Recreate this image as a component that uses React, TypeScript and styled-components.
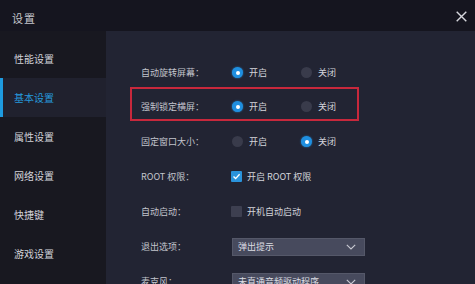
import React from "react";
import styled, { createGlobalStyle } from "styled-components";

const Global = createGlobalStyle`
  html, body { margin: 0; padding: 0; background: #222433; }
  body { font-family: "Noto Sans CJK SC", "Noto Sans", sans-serif; }
  * { box-sizing: border-box; }
`;

const Window = styled.div`
  width: 475px;
  height: 284px;
  overflow: hidden;
  display: flex;
  flex-direction: column;
  background: #222433;
  color: #c9cad3;
`;

const Header = styled.div`
  height: 31px;
  flex: none;
  display: flex;
  align-items: center;
  justify-content: space-between;
  padding: 4px 8px 0 12px;
  background: #15151f;
`;

const Title = styled.div`
  font-size: 11px;
  color: #c4c5cc;
  letter-spacing: 1px;
`;

const Close = styled.svg`
  width: 11px;
  height: 11px;
  margin-bottom: 3px;
`;

const Body = styled.div`
  flex: 1;
  display: flex;
  min-height: 0;
`;

const Sidebar = styled.div`
  width: 106px;
  flex: none;
  background: #181820;
  padding-top: 8px;
  display: flex;
  flex-direction: column;
`;

const NavItem = styled.div<{ $active?: boolean }>`
  height: 39px;
  display: flex;
  align-items: center;
  padding-left: 14px;
  font-size: 10px;
  color: ${(p) => (p.$active ? "#2699dc" : "#d2d3da")};
  background: ${(p) => (p.$active ? "#20212e" : "transparent")};
  border-left: 3px solid ${(p) => (p.$active ? "#1e9be0" : "transparent")};
  padding-left: 11px;
`;

const Content = styled.div`
  flex: 1;
  padding: 24px 0 0 24px;
  display: flex;
  flex-direction: column;
`;

const Row = styled.div<{ $highlight?: boolean }>`
  width: 229px;
  flex: none;
  display: flex;
  align-items: center;
  height: ${(p) => (p.$highlight ? "34px" : "35px")};
  padding-left: ${(p) => (p.$highlight ? "9px" : "11px")};
  padding-top: ${(p) => (p.$highlight ? "5px" : "0")};
  margin: ${(p) => (p.$highlight ? "-3px 0 3px" : "0")};
  border: ${(p) => (p.$highlight ? "2px solid #c8283c" : "none")};
`;

const Label = styled.div`
  width: 91px;
  flex: none;
  font-size: 9px;
  color: #c3c4cd;
  white-space: nowrap;
`;

const Option = styled.div`
  width: 69px;
  flex: none;
  display: flex;
  align-items: center;
  gap: 6px;
  font-size: 9px;
  color: #d3d4db;
  white-space: nowrap;
`;

const Radio = styled.span<{ $on?: boolean }>`
  width: 11px;
  height: 11px;
  border-radius: 50%;
  flex: none;
  background: ${(p) => (p.$on ? "#1f8fe0" : "#393b4b")};
  display: flex;
  align-items: center;
  justify-content: center;
  box-shadow: ${(p) => (p.$on ? "0 0 2px rgba(40,150,230,0.8)" : "none")};
  &::after {
    content: "";
    width: 4px;
    height: 4px;
    border-radius: 50%;
    background: #fff;
    display: ${(p) => (p.$on ? "block" : "none")};
  }
`;

const Check = styled.span<{ $on?: boolean }>`
  width: 11px;
  height: 11px;
  flex: none;
  border-radius: 1px;
  background: ${(p) => (p.$on ? "#2a93dc" : "#3d3f50")};
  display: flex;
  align-items: center;
  justify-content: center;
  margin-left: -1px;
`;

const CheckOption = styled(Option)`
  width: auto;
  gap: 5px;
`;

const Select = styled.div`
  width: 133px;
  height: 18px;
  flex: none;
  margin-left: 0;
  display: flex;
  align-items: center;
  justify-content: space-between;
  padding: 0 8px 0 5px;
  background: #474a5d;
  border: 1px solid #555869;
  font-size: 9px;
  color: #dcdde3;
  white-space: nowrap;
`;

const Chevron = () => (
  <svg width="10" height="6" viewBox="0 0 10 6">
    <path d="M0.8 0.8 L5 5 L9.2 0.8" fill="none" stroke="#c9cad3" strokeWidth="1.1" />
  </svg>
);

const Tick = () => (
  <svg width="9" height="9" viewBox="0 0 9 9">
    <path d="M1.5 4.6 L3.6 6.6 L7.6 2.2" fill="none" stroke="#fff" strokeWidth="1.4" />
  </svg>
);

const nav = ["性能设置", "基本设置", "属性设置", "网络设置", "快捷键", "游戏设置"];

export default function App() {
  return (
    <Window>
      <Global />
      <Header>
        <Title>设置</Title>
        <Close viewBox="0 0 11 11">
          <path d="M0.7 0.7 L10.3 10.3 M10.3 0.7 L0.7 10.3" stroke="#d6d7dd" strokeWidth="1.4" />
        </Close>
      </Header>
      <Body>
        <Sidebar>
          {nav.map((n, i) => (
            <NavItem key={n} $active={i === 1}>
              {n}
            </NavItem>
          ))}
        </Sidebar>
        <Content>
          <Row>
            <Label>自动旋转屏幕：</Label>
            <Option>
              <Radio $on />
              开启
            </Option>
            <Option>
              <Radio />
              关闭
            </Option>
          </Row>
          <Row $highlight>
            <Label>强制锁定横屏：</Label>
            <Option>
              <Radio $on />
              开启
            </Option>
            <Option>
              <Radio />
              关闭
            </Option>
          </Row>
          <Row>
            <Label>固定窗口大小：</Label>
            <Option>
              <Radio />
              开启
            </Option>
            <Option>
              <Radio $on />
              关闭
            </Option>
          </Row>
          <Row>
            <Label>ROOT 权限：</Label>
            <CheckOption>
              <Check $on>
                <Tick />
              </Check>
              开启 ROOT 权限
            </CheckOption>
          </Row>
          <Row>
            <Label>自动启动：</Label>
            <CheckOption>
              <Check />
              开机自动启动
            </CheckOption>
          </Row>
          <Row>
            <Label>退出选项：</Label>
            <Select>
              弹出提示
              <Chevron />
            </Select>
          </Row>
          <Row>
            <Label>麦克风：</Label>
            <Select>
              未直通音频驱动程序
              <Chevron />
            </Select>
          </Row>
        </Content>
      </Body>
    </Window>
  );
}
